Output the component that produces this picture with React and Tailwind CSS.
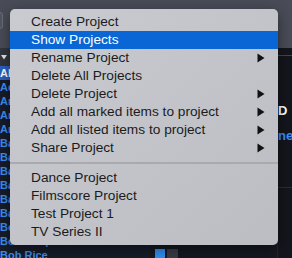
import React from "react";

const items = [
  { label: "Create Project" },
  { label: "Show Projects", active: true },
  { label: "Rename Project", sub: true },
  { label: "Delete All Projects" },
  { label: "Delete Project", sub: true },
  { label: "Add all marked items to project", sub: true },
  { label: "Add all listed items to project", sub: true },
  { label: "Share Project", sub: true },
];

const projects = ["Dance Project", "Filmscore Project", "Test Project 1", "TV Series II"];

const people = [
  "Adam", "Anna", "Andre", "Anton", "Barbara", "Bart", "Basil",
  "Bastian", "Bauer", "Baxter", "Ben", "Bob Baupit", "Bob Rice",
];

function Arrow() {
  return (
    <svg width="8" height="10" viewBox="0 0 8 10" className="block">
      <path d="M0.5 0.5 L7.5 5 L0.5 9.5 Z" fill="#111" />
    </svg>
  );
}

function Row({ label, active, sub }) {
  return (
    <div
      className={
        "flex h-[18px] items-center justify-between pl-[21px] pr-[13px] " +
        (active ? "bg-[#0a66d4] text-white" : "text-[#1b1b1d]")
      }
    >
      <span className="leading-none">{label}</span>
      {sub && <Arrow />}
    </div>
  );
}

export default function App() {
  return (
    <div className="relative h-[258px] w-[292px] overflow-hidden bg-[#151820] font-['Liberation_Sans',Arial,sans-serif]">
      {/* top toolbar */}
      <div className="relative h-[48px] bg-[#494c57]">
        <div className="absolute left-[-4px] top-[12px] h-[17px] w-[7px] rounded-[3px] border border-[#6a6d78] bg-[#53565f]" />
      </div>

      <div className="flex">
        {/* left list */}
        <div className="w-[150px] bg-[#171c2a]">
          <div className="flex h-[18px] items-center bg-[#33363f] pl-[1px]">
            <svg width="6" height="5" viewBox="0 0 6 5">
              <path d="M0 0 H6 L3 4.5 Z" fill="#e6e6e6" />
            </svg>
          </div>
          <div className="flex h-[14px] items-center bg-[#2d5fc0] text-[11px] font-bold leading-none text-white">
            All
          </div>
          {people.map((p) => (
            <div
              key={p}
              className="flex h-[14px] items-center text-[11px] font-bold leading-none text-[#3c8ff0]"
            >
              {p}
            </div>
          ))}
        </div>

        {/* middle scroller */}
        <div className="relative flex-1">
          <div className="absolute bottom-0 left-[5px] h-[13px] w-[10px] bg-[#2f8ef0]" />
          <div className="absolute bottom-0 left-[17px] h-[13px] w-[11px] bg-[#3a3c45]" />
        </div>

        {/* right detail */}
        <div className="w-[15px] border-l border-[#22252e] bg-[#14161d]">
          <div className="h-[8px] border-b border-[#2e4f55]" />
          <div className="pt-[48px] text-[13px] font-bold leading-none text-white">D</div>
          <div className="pt-[12px] text-[13px] font-bold leading-none text-[#3c8ff0]">ner</div>
          <div className="mt-[45px] h-px bg-[#2a2d36]" />
        </div>
      </div>

      {/* context menu */}
      <div className="absolute left-[10px] top-[9px] w-[268px] rounded-[5px] bg-gradient-to-br from-[#c9cbd0] to-[#bbbdc2] py-[4px] text-[13.7px] shadow-[0_4px_14px_rgba(0,0,0,0.45)]">
        {items.map((it) => (
          <Row key={it.label} {...it} />
        ))}
        <div className="flex h-[12px] items-center">
          <div className="h-[2px] w-full bg-[#a8aaaf]" />
        </div>
        {projects.map((p) => (
          <Row key={p} label={p} />
        ))}
      </div>
    </div>
  );
}
